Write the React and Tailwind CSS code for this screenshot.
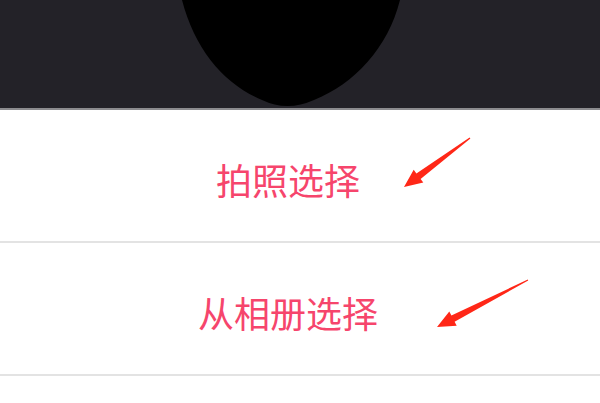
const options = ['拍照选择', '从相册选择'];

export default function App() {
  return (
    <div className="relative w-[600px] h-[403px] overflow-hidden bg-white" style={{ fontFamily: '"Noto Sans CJK SC", "Noto Sans", sans-serif' }}>
      {/* Camera preview strip */}
      <div className="h-[110px] bg-[#232228] border-b-2 border-[#8c8c8f]">
        <svg width="600" height="108" viewBox="0 0 600 108" className="block">
          <path d="M182 0 C195 50 224 84 262 100 Q287 112 314 100 C354 84 388 48 400 0 Z" fill="#000" />
        </svg>
      </div>

      {/* Action sheet rows */}
      <div className="flex flex-col">
        {options.map((label) => (
          <div key={label} className="h-[133px] flex items-center justify-center border-b-2 border-[#e3e3e3]">
            <span className="text-[36px] leading-none text-[#f6456c] translate-x-[-12px] translate-y-[3px]">{label}</span>
          </div>
        ))}
      </div>

      {/* Pointer arrows */}
      <svg className="absolute top-0 left-0 pointer-events-none" width="600" height="403" viewBox="0 0 600 403">
        <polygon points="470.4,138.4 420.6,179 423.3,182.6 404,187 413.7,169.8 416.4,173.4 469.6,137.6" fill="#ff2717" />
        <polygon points="528.2,280.5 454.6,321.8 456.7,325.8 437,327 449.3,311.6 451.4,315.6 527.8,279.5" fill="#ff2717" />
      </svg>
    </div>
  );
}
